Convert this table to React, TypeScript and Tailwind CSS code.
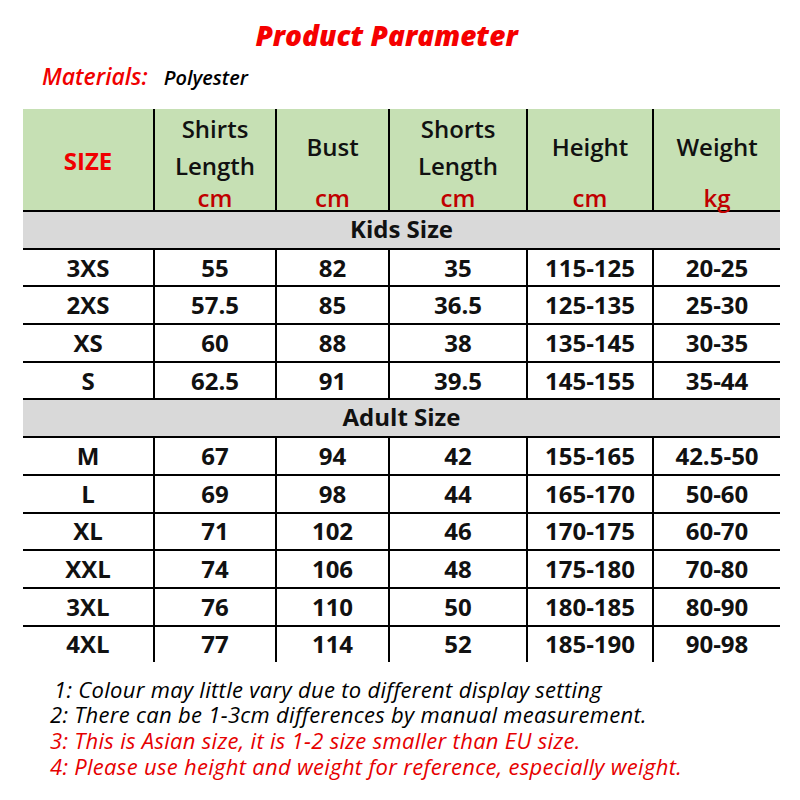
import React from 'react';

const cols = 'grid grid-cols-[130px_122px_113px_138px_126px_128px]';

const kids = [
  ['3XS', '55', '82', '35', '115-125', '20-25'],
  ['2XS', '57.5', '85', '36.5', '125-135', '25-30'],
  ['XS', '60', '88', '38', '135-145', '30-35'],
  ['S', '62.5', '91', '39.5', '145-155', '35-44'],
];

const adults = [
  ['M', '67', '94', '42', '155-165', '42.5-50'],
  ['L', '69', '98', '44', '165-170', '50-60'],
  ['XL', '71', '102', '46', '170-175', '60-70'],
  ['XXL', '74', '106', '48', '175-180', '70-80'],
  ['3XL', '76', '110', '50', '180-185', '80-90'],
  ['4XL', '77', '114', '52', '185-190', '90-98'],
];

const headers = [
  { label: ['Shirts', 'Length'], unit: 'cm' },
  { label: ['Bust'], unit: 'cm' },
  { label: ['Shorts', 'Length'], unit: 'cm' },
  { label: ['Height'], unit: 'cm' },
  { label: ['Weight'], unit: 'kg' },
];

function DataRow({ row, last }: { row: string[]; last?: boolean }) {
  return (
    <div className={`${cols} border-t-2 border-black ${last ? 'h-[37px]' : 'h-[37.7px]'}`}>
      {row.map((v, i) => (
        <div
          key={i}
          className={`flex items-center justify-center ${i > 0 ? 'border-l-2 border-black' : ''}`}
        >
          {v}
        </div>
      ))}
    </div>
  );
}

function Band({ title }: { title: string }) {
  return (
    <div className="flex h-[37.7px] items-center justify-center border-t-2 border-black bg-[#d9d9d9] pb-[2px]">
      {title}
    </div>
  );
}

export default function App() {
  return (
    <div className="h-[800px] w-[800px] bg-white" style={{ fontFamily: '"Open Sans", "Noto Sans", sans-serif' }}>
      <div className="pt-[15px] pr-[27px] text-center text-[28px] font-extrabold italic leading-[40px] text-[#f50000]">
        Product Parameter
      </div>
      <div className="mt-[5px] flex items-baseline pl-[42px] italic leading-[32px]">
        <span className="text-[23px] font-semibold text-[#f00000]">Materials:</span>
        <span className="ml-[16px] text-[20px] font-semibold text-black">Polyester</span>
      </div>

      <div className="ml-[23px] mt-[15px] w-[757px] text-[24px] font-bold leading-none text-[#111]">
        <div className={`${cols} h-[101px] bg-[#c6e0b4]`}>
          <div className="flex items-center justify-center pt-[2px] text-[#f00000]">SIZE</div>
          {headers.map((h, i) => (
            <div key={i} className="flex flex-col border-l-2 border-black">
              <div className="flex h-[76px] flex-col items-center justify-center gap-[13px] font-semibold">
                {h.label.map((l) => (
                  <span key={l}>{l}</span>
                ))}
              </div>
              <div className="pt-[1px] text-center font-semibold text-[#c00000]">{h.unit}</div>
            </div>
          ))}
        </div>
        <Band title="Kids Size" />
        {kids.map((r) => (
          <DataRow key={r[0]} row={r} />
        ))}
        <Band title="Adult Size" />
        {adults.map((r, i) => (
          <DataRow key={r[0]} row={r} last={i === adults.length - 1} />
        ))}
      </div>

      <div className="ml-[50px] mt-[15px] text-[22px] italic leading-[25.7px] tracking-[0.3px]">
        <div className="ml-[4px] text-black">1: Colour may little vary due to different display setting</div>
        <div className="text-black">2: There can be 1-3cm differences by manual measurement.</div>
        <div className="text-[#e60000]">3: This is Asian size, it is 1-2 size smaller than EU size.</div>
        <div className="text-[#e60000]">4: Please use height and weight for reference, especially weight.</div>
      </div>
    </div>
  );
}
